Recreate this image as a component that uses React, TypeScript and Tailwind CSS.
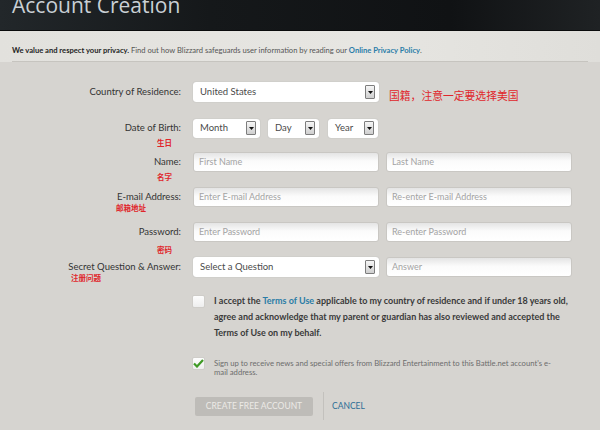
const labelFont = { fontFamily: "Lato, 'Liberation Sans', sans-serif" };

function Arrow() {
  return (
    <span className="flex h-[14px] w-[10px] items-center justify-center rounded-[1px] border border-[#7d7d7d] bg-[linear-gradient(#f6f6f6,#cfcfcf)]">
      <svg width="5" height="3" viewBox="0 0 5 3">
        <path d="M0 0h5L2.5 3z" fill="#111" />
      </svg>
    </span>
  );
}

function Select({ text, className }: { text: string; className: string }) {
  return (
    <div
      className={`flex items-center justify-between rounded-[3px] bg-white pl-[7px] pr-[4px] text-[9.5px] text-[#4a4a4a] shadow-[0_0_1px_rgba(0,0,0,0.25)] ${className}`}
    >
      <span>{text}</span>
      <Arrow />
    </div>
  );
}

function Field({ placeholder }: { placeholder: string }) {
  return (
    <div className="flex h-[20px] w-[186px] items-center rounded-[3px] border border-[#c9c7c3] bg-[linear-gradient(#e4e4e4,#fbfbfb_45%,#ffffff)] pl-[5px] text-[9px] text-[#a3a3a3]">
      {placeholder}
    </div>
  );
}

function Note({ text, className }: { text: string; className: string }) {
  return (
    <span
      className={`absolute text-[7.5px] leading-[8px] font-bold text-[#e0262b] ${className}`}
      style={{ fontFamily: "'Noto Sans CJK SC', sans-serif" }}
    >
      {text}
    </span>
  );
}

function Row({
  label,
  className,
  children,
}: {
  label: string;
  className: string;
  children: React.ReactNode;
}) {
  return (
    <div className={`relative flex h-[20px] items-center ${className}`}>
      <div className="w-[181px] shrink-0 text-right text-[9.5px] text-[#333]">{label}</div>
      <div className="ml-[12px] flex items-center gap-[7px]">{children}</div>
    </div>
  );
}

export default function App() {
  return (
    <div className="h-[430px] w-[600px] overflow-hidden bg-[#d6d4d0]" style={labelFont}>
      <div className="h-[31px] overflow-hidden border-b border-[#0a0b0c] bg-[linear-gradient(90deg,#22272a,#15181a_35%,#101214_75%,#1f2224)]">
        <div
          className="-mt-[5px] pl-[12px] text-[21px] leading-[21px] text-[#c9d0d5]"
          style={{ fontFamily: "'Open Sans', sans-serif" }}
        >
          Account Creation
        </div>
      </div>

      <div className="bg-[linear-gradient(90deg,#e2e1dd,#e7e6e2_60%,#dfdeda)]">
        <div className="mx-[12px] h-[31px] border-b border-[#c6c4bf] pt-[14px] text-[7.6px] leading-[10px] text-[#555]">
          <span className="font-bold text-[#1f1f1f]">We value and respect your privacy.</span> Find out how
          Blizzard safeguards user information by reading our{" "}
          <span className="font-bold text-[#2a7da8]">Online Privacy Policy</span>.
        </div>
      </div>

      <div className="relative pt-[20px]">
        <Row label="Country of Residence:" className="">
          <Select text="United States" className="h-[20px] w-[186px]" />
          <span
            className="absolute left-[389px] top-[8px] text-[10.8px] leading-[11px] text-[#e0262b]"
            style={{ fontFamily: "'Noto Sans CJK SC', sans-serif" }}
          >
            国籍，注意一定要选择美国
          </span>
        </Row>

        <Row label="Date of Birth:" className="mt-[16px]">
          <Select text="Month" className="h-[19px] w-[67px]" />
          <Select text="Day" className="ml-[1px] h-[19px] w-[51px]" />
          <Select text="Year" className="ml-[2px] h-[19px] w-[50px]" />
          <Note text="生日" className="left-[157px] top-[21px]" />
        </Row>

        <Row label="Name:" className="mt-[14px]">
          <Field placeholder="First Name" />
          <Field placeholder="Last Name" />
          <Note text="名字" className="left-[157px] top-[21px]" />
        </Row>

        <Row label="E-mail Address:" className="mt-[15px]">
          <Field placeholder="Enter E-mail Address" />
          <Field placeholder="Re-enter E-mail Address" />
          <Note text="邮箱地址" className="left-[116px] top-[17px]" />
        </Row>

        <Row label="Password:" className="mt-[15px]">
          <Field placeholder="Enter Password" />
          <Field placeholder="Re-enter Password" />
          <Note text="密码" className="left-[157px] top-[24px]" />
        </Row>

        <Row label="Secret Question & Answer:" className="mt-[15px]">
          <Select text="Select a Question" className="h-[20px] w-[186px]" />
          <Field placeholder="Answer" />
          <Note text="注册问题" className="left-[71px] top-[17px]" />
        </Row>

        <div className="ml-[192px] mt-[16px] flex items-start">
          <span className="mt-[2px] h-[13px] w-[13px] shrink-0 rounded-[2px] border border-[#cfcdc9] bg-[linear-gradient(#fdfdfd,#eeeeee)]" />
          <p className="ml-[9px] w-[362px] text-[9px] font-bold leading-[16px] text-[#3a3a3a]">
            I accept the <span className="text-[#2a7ca6]">Terms of Use</span> applicable to my country of residence
            and if under 18 years old, agree and acknowledge that my parent or guardian has also reviewed and accepted
            the Terms of Use on my behalf.
          </p>
        </div>

        <div className="ml-[192px] mt-[16px] flex items-start">
          <span className="flex h-[13px] w-[13px] shrink-0 items-center justify-center rounded-[2px] border border-[#cfcdc9] bg-[linear-gradient(#fdfdfd,#eeeeee)]">
            <svg width="11" height="9" viewBox="0 0 11 9">
              <path d="M1 4.5 4 7.5 10 1" fill="none" stroke="#3f9a25" strokeWidth="2.2" />
            </svg>
          </span>
          <p className="ml-[9px] mt-[2px] w-[375px] text-[7.7px] leading-[9px] text-[#6d6d6d]">
            Sign up to receive news and special offers from Blizzard Entertainment to this Battle.net account's e-
            <br />
            mail address.
          </p>
        </div>

        <div className="ml-[195px] mt-[15px] flex items-center">
          <div className="flex h-[19px] w-[118px] items-center justify-center rounded-[2px] bg-[#bebcb8] text-[8.5px] text-[#eceae6]">
            CREATE FREE ACCOUNT
          </div>
          <span className="ml-[10px] h-[28px] w-px bg-[#c3c1bd]" />
          <span className="ml-[8px] text-[8.5px] text-[#2d6e96]">CANCEL</span>
        </div>
      </div>
    </div>
  );
}
